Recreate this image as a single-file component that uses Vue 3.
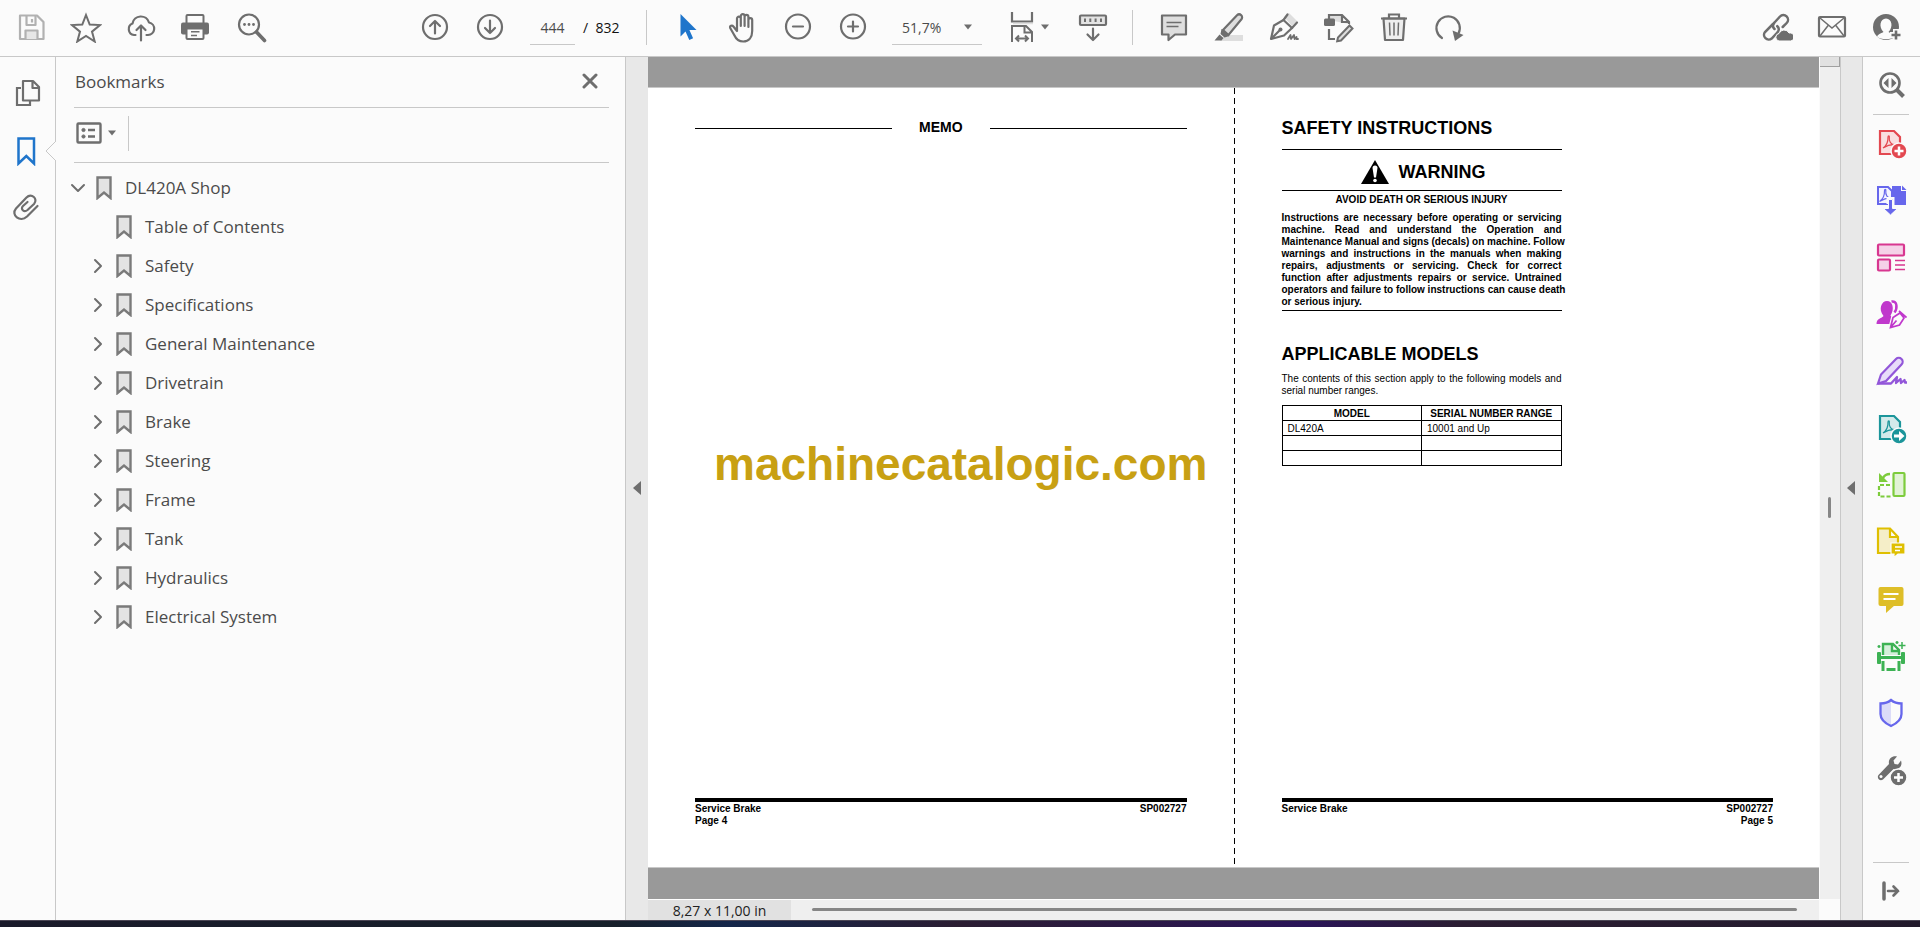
<script setup>
import { ref } from 'vue'

const pageNumber = ref('444')
const zoom = ref('51,7%')

const G = '#6e6e6e'
const line = `fill="none" stroke="${G}" stroke-width="2.2" stroke-linecap="round" stroke-linejoin="round"`
const pdfMark = (c) => `<path d="M8 21c3-2 5.200-5.500 5-11c0-1.500 1.500-1.500 1.300 0c-.6 4.500 1.700 7.700 5.700 7.700c-4-.4-8 .9-12 3.300z" fill="none" stroke="${c}" stroke-width="1.200"/>`

const fileActions = [
  { label: 'Save', svg: '<g fill="none" stroke="#b1b1b1" stroke-width="2.200" stroke-linejoin="round"><path d="M5 4.500H22L28.500 11V28H5z"/><path d="M11.500 5v9h9V5M17 8v3.500"/><path d="M10.500 28v-8.500h12V28" fill="#e6e6e6"/></g>' },
  { label: 'Star', svg: `<path d="M16 4l3.700 9.600 10.300.5-8 6.500 2.700 9.900L16 25l-8.700 5.500 2.700-9.900-8-6.500 10.300-.5z" fill="none" stroke="${G}" stroke-width="2"/>` },
  { label: 'Upload', svg: `<g ${line}><path d="M10.500 24H9A6 6 0 0 1 7.500 12.500A8.500 8.500 0 0 1 24 11.500A6.300 6.300 0 0 1 23 24H21.500"/><path d="M16 29.500V15M11.500 19l4.500-4.500 4.500 4.500"/></g>` },
  { label: 'Print', svg: `<rect x="6.500" y="4" width="17" height="9" rx="1" fill="#fbfbfb" stroke="${G}" stroke-width="2"/><rect x="1" y="11.500" width="28" height="12" rx="2" fill="${G}"/><rect x="6.500" y="17.500" width="17" height="10.500" rx="1" fill="#fbfbfb" stroke="${G}" stroke-width="2"/><path d="M11 20.800h8.500M11 24.500h6M24 14.500h2" stroke="${G}" stroke-width="1.500"/>` },
  { label: 'Find', svg: `<circle cx="14" cy="13.500" r="10" ${line}/><path d="M21.500 21l8 8.500" stroke="${G}" stroke-width="3.600" stroke-linecap="round"/><g fill="${G}"><circle cx="9.500" cy="13.500" r="1.400"/><circle cx="14" cy="13.500" r="1.400"/><circle cx="18.500" cy="13.500" r="1.400"/></g>` },
]
const pageActions = [
  { label: 'Previous page', svg: `<g ${line}><circle cx="16" cy="16" r="12"/><path d="M16 22.500V10M11 15l5-5 5 5"/></g>` },
  { label: 'Next page', svg: `<g ${line}><circle cx="16" cy="16" r="12"/><path d="M16 9.500V22M11 17l5 5 5-5"/></g>` },
]
const viewActions = [
  { label: 'Select', svg: '<path d="M8.500 3v22.500l5-5 3.800 8.500 3.800-1.700-3.700-8.300h7.100z" fill="#1f75cb"/>' },
  { label: 'Pan', svg: `<path d="M10 18V7.500a1.900 1.900 0 0 1 3.800 0V15V5a1.900 1.900 0 0 1 3.800 0V15V5.800a1.900 1.900 0 0 1 3.800 0V16V9a1.900 1.900 0 0 1 3.800 0V20c0 6-3.200 10.500-9 10.500c-5 0-7.200-2.500-9-6.500L3.200 17c-.7-2 1.800-3.200 3.200-1.500L10 20z" ${line}/>` },
  { label: 'Zoom out', svg: `<g ${line}><circle cx="16" cy="15.500" r="12"/><path d="M11 15.500h10"/></g>` },
  { label: 'Zoom in', svg: `<g ${line}><circle cx="16" cy="15.500" r="12"/><path d="M11 15.500h10M16 10.500v10"/></g>` },
]
const fitIcon = `<path d="M6 1v9.500h20V1" fill="none" stroke="${G}" stroke-width="2.200"/><path d="M7 12.500h20" stroke="#dedede" stroke-width="1.500"/><path d="M6 31V15H20l6 6V31M18.500 15v6.500H26M10 27.500h12M13 24.500l-3 3 3 3M19 24.500l3 3-3 3" fill="none" stroke="${G}" stroke-width="2"/>`
const keysIcon = `<rect x="3" y="4.500" width="26" height="9.500" rx="1" fill="#e3e3e3" stroke="${G}" stroke-width="2.200"/><path d="M8 7.500v3.500M13.300 7.500v3.500M18.600 7.500v3.500M24 7.500v3.500" stroke="${G}" stroke-width="2"/><path d="M16 17.500v11M10.500 23.500l5.500 5.500 5.500-5.500" ${line}/>`
const editActions = [
  { label: 'Comment', svg: `<path d="M4 4.500h24v19H17l-6.500 5.500v-5.500H4z" fill="#dedede" stroke="${G}" stroke-width="2.200" stroke-linejoin="round"/><path d="M8.500 11.500h15M8.500 15.500h12" stroke="${G}" stroke-width="1.600"/>` },
  { label: 'Highlight', svg: `<path d="M12 24H30v6H7z" fill="#dedede"/><path d="M10 19L24 4.300a3 3 0 0 1 4.200 4.300L15.500 24z" fill="#dedede" stroke="${G}" stroke-width="2.200"/><path d="M8.500 18l8 7-5 1.500-4-3.500zM6.500 23.500l4 3.500-2 2.500H1.500z" fill="${G}"/>` },
  { label: 'Sign', svg: `<path d="M16 6l5-4 8 8-5 5z" fill="#dedede"/><g ${line}><path d="M19.500 3.500L15.500 9l8.500 8 5-5.500"/><path d="M15.500 9L6 14.500L3 28l13-3.500L24 17"/><path d="M3.500 27.500l8.500-8.500"/><path d="M20 28l2.500-4 .5 4 3-4 .5 4 2-2v2h1.500" stroke-width="1.800"/></g><circle cx="12.500" cy="18.500" r="2" fill="${G}"/>` },
  { label: 'Edit document', svg: `<path d="M6 9V4H19l7 7v2M19 4v7h6" fill="#dedede" stroke="${G}" stroke-width="2.200"/><rect x="1" y="7.500" width="11" height="7.500" rx="1.500" fill="${G}"/><path d="M6 18v10h6" fill="none" stroke="${G}" stroke-width="2.200"/><path d="M26.500 14.500l3 3L18 29.500l-3.800.8.800-3.800z" fill="#dedede" stroke="${G}" stroke-width="2"/>` },
  { label: 'Delete', svg: `<path d="M5.500 7.500h21L25 29H7z" fill="#eeeeee" stroke="${G}" stroke-width="2.200" stroke-linejoin="round"/><path d="M3 7.500h26M11 7V3.500h10V7" fill="none" stroke="${G}" stroke-width="2.200"/><path d="M11.500 11.500l.5 13M16 11.500v13M20.500 11.500l-.5 13" stroke="${G}" stroke-width="1.500"/>` },
  { label: 'Rotate', svg: `<path d="M9 27A11.700 11.700 0 1 1 25.500 22.500" ${line}/><path d="M19.500 19.500l11 4.500-8.500 6z" fill="${G}"/>` },
]
const shareActions = [
  { label: 'Share link', svg: `<g fill="none" stroke="${G}" stroke-width="2.500" stroke-linecap="round"><path d="M13.500 18c-2-2-2-4.500 0-6.500l5.500-6a4.600 4.600 0 0 1 6.700 6.500l-4 4"/><path d="M12 13l-8 8a4.700 4.700 0 0 0 6.700 6.500l5.600-6c2-2 2-4.500 0-6.300"/></g><path d="M18 30a3.800 3.800 0 0 1 0-7.500 5.500 5.500 0 0 1 10-.5 4 4 0 0 1 1.500 8z" fill="${G}" stroke="#fbfbfb"/>` },
  { label: 'Email', svg: `<g fill="none" stroke="${G}"><rect x="3" y="6" width="26" height="19.500" rx="1" stroke-width="2.200"/><path d="M4 7l12 10L28 7M4 25l8.500-11M28 25l-8.500-11" stroke-width="1.500"/></g>` },
  { label: 'Account', svg: `<circle cx="15" cy="16" r="13" fill="${G}"/><path d="M6 25.500c1.500-3 5.500-3.500 6.500-4.500c-5-5-3.500-13.500 2.500-13.500s7.500 8.500 2.500 13.500c1 1 5 1.500 6.500 4.500c-3 3.500-15 3.500-18 0z" fill="#fbfbfb"/><path d="M25 18v12M19 24h12" stroke="#fbfbfb" stroke-width="6"/><path d="M25 19.500v9M20.500 24h9" stroke="${G}" stroke-width="2.600"/>` },
]
const railTabs = [
  { label: 'Page thumbnails', svg: `<path d="M9 11H5v17h13v-4" fill="none" stroke="${G}" stroke-width="2.200"/><path d="M11 4h10l6 6v13.500H11zM20.500 4v7H27" fill="#fbfbfb" stroke="${G}" stroke-width="2.200" stroke-linejoin="round"/>` },
  { label: 'Bookmarks', svg: '<path d="M6.500 4.500h15.500V29.500l-7.700-7.500-7.800 7.500z" fill="none" stroke="#1f75cb" stroke-width="2.500"/>' },
  { label: 'Attachments', svg: `<path d="M25.500 15L15 25.500C8 32-1.500 24 4 17.500L14.500 6.500C19.500 1.500 26.500 8 22 13L15.500 19C12 22 8 18 11 15L15.500 11" ${line}/>` },
]
const tools = [
  { label: 'Create PDF', svg: `<path d="M5 4h14l6 6v17H5z" fill="#f9dfe0" stroke="#e34850" stroke-width="2.200"/>${pdfMark('#e34850')}<circle cx="24" cy="24" r="8" fill="#e34850" stroke="#fbfbfb" stroke-width="1.500"/><path d="M24 19.500v9M19.500 24h9" stroke="#fff" stroke-width="2.500"/>` },
  { label: 'Combine Files', svg: `<path d="M17 2h9v5h5v14H17z" fill="#6767ec"/><path d="M27 1.500l4.500 4.500H27z" fill="#6767ec"/><path d="M3 3h10l4 4v13H3z" fill="#f4f4ff" stroke="#6767ec" stroke-width="2"/><g transform="translate(-3.500 -3.500)">${pdfMark('#6767ec')}</g><path d="M12.500 20V14h6v11" fill="none" stroke="#fbfbfb" stroke-width="2"/><path d="M13.500 15.500h4V24.500h5l-7 6.500-7-6.500h5z" fill="#6767ec" stroke="#fbfbfb" stroke-width="1"/>` },
  { label: 'Organize Pages', svg: '<g fill="#f5d2e8" stroke="#d83790" stroke-width="2.200"><rect x="3" y="3.500" width="26" height="11" rx="1"/><rect x="3" y="18.500" width="12" height="11" rx="1"/></g><path d="M20 19.500h10M20 24h10M20 28.500h10" stroke="#d83790" stroke-width="1.500"/>' },
  { label: 'Request Signatures', svg: '<path d="M1.500 26c0-6 5.500-5.500 7-8C3 11 6.500 3 12 3s8 8 3.500 14.500c1.500 2.500 5 2 6 8.500z" fill="#c038cc"/><path d="M16.500 3.500c6-1 6 7 3 11" fill="none" stroke="#c038cc" stroke-width="2.500"/><path d="M15.500 29.500l2.500-10 7-4.500 4 5-4.500 7z" fill="#fbfbfb" stroke="#fbfbfb" stroke-width="4"/><path d="M15.500 29.500l2.500-10 7-4.500 4 5-4.500 7zM15.500 29.500l6-7M24 13l7.500 6.500" fill="none" stroke="#c038cc" stroke-width="1.700"/>' },
  { label: 'Fill and Sign', svg: '<path d="M3 28.500l3-9L21 4a3.600 3.600 0 0 1 5.500 5.500L11 26z" fill="#e8dcfa" stroke="#9256d9" stroke-width="2.200"/><path d="M3 28.500h13l6-6.500-1 6 4.500-4 .5 4 3.500-3 .500 2.500h2" fill="none" stroke="#9256d9" stroke-width="2.300" stroke-linejoin="round"/>' },
  { label: 'Export PDF', svg: `<path d="M5 4h14l6 6v17H5z" fill="#d3eaea" stroke="#1b959a" stroke-width="2.200"/>${pdfMark('#1b959a')}<circle cx="24" cy="24" r="8" fill="#1b959a" stroke="#fbfbfb" stroke-width="1.500"/><path d="M19 22.500h5v-3.500l5.500 5-5.500 5v-3.500h-5z" fill="#fff"/>` },
  { label: 'Compare Files', svg: '<rect x="18.500" y="4" width="11" height="23" rx="1" fill="#e2f3d6" stroke="#7dcc3c" stroke-width="2.200"/><path d="M15 16H4v11.500h12" fill="none" stroke="#7dcc3c" stroke-width="2.200" stroke-dasharray="4 2"/><path d="M15 5c-4 0-6 2-7 4" fill="none" stroke="#7dcc3c" stroke-width="2.500"/><path d="M4 4v9h9z" fill="#7dcc3c"/>' },
  { label: 'Send for Comments', svg: '<path d="M3 2.500h12l8 8.500v16H3zM15 2.500V11h8" fill="#f5eec8" stroke="#dfbf00" stroke-width="2.200"/><path d="M16 17h14v11h-7l-4 3.500V28h-3z" fill="#dfbf00" stroke="#fbfbfb" stroke-width="1.200"/><path d="M20 21h7M20 24.500h5" stroke="#fff" stroke-width="1.500"/>' },
  { label: 'Comment', svg: '<rect x="3.500" y="4" width="25" height="19" rx="2" fill="#debe28"/><path d="M11 22v8l9-8z" fill="#debe28"/><path d="M8.500 11h15M8.500 16h12" stroke="#fff" stroke-width="2"/>' },
  { label: 'Scan and OCR', svg: '<path d="M8 15V4h10l6 6v5M17 4v7h7" fill="#d5efda" stroke="#3db254" stroke-width="2.400"/><rect x="2" y="12" width="4" height="12" rx="1" fill="#3db254"/><rect x="26" y="12" width="4" height="12" rx="1" fill="#3db254"/><path d="M4 17.500h24M8 21v10M24 21v10M11.500 29.500h9" stroke="#3db254" stroke-width="3" fill="none"/><path d="M27 2v7M23.500 5.500h7M4 5v3M2.500 6.500h3M22 1v3M20.500 2.500h3" stroke="#3db254" stroke-width="1.500"/>' },
  { label: 'Protect', svg: '<path d="M16 3.500C13 6 9 7 5.500 7v10c0 6 5 9.500 10.500 12.500z" fill="#dcdcf8"/><path d="M16 3C13 5.500 9 6.500 5.500 6.500V17c0 6 5 9.500 10.500 12C21.500 26.500 26.500 23 26.500 17V6.500C23 6.500 19 5.500 16 3z" fill="none" stroke="#6767ec" stroke-width="2.300"/>' },
  { label: 'More Tools', svg: `<path d="M14 10C13 5 17 1.500 22 2.500l-3.500 4 1 3.500 3.500.5 3-4c2 6-2.500 9.500-7.500 8.500L9 24.500c-3 4-8 0-5.500-3.500z" fill="${G}"/><circle cx="6" cy="22.500" r="1.500" fill="#fbfbfb"/><circle cx="23.500" cy="23.500" r="8.500" fill="${G}" stroke="#fbfbfb" stroke-width="1.500"/><path d="M23.500 19v9M19 23.500h9" stroke="#fff" stroke-width="2.500"/>` },
]
const zoomToolIcon = `<circle cx="15" cy="14" r="9.500" fill="none" stroke="${G}" stroke-width="2.600"/><path d="M13.500 9v10l-5-5zM16.500 9v10l5-5z" fill="${G}"/><path d="M22 21l6.500 6.500" stroke="${G}" stroke-width="4"/>`

const children = ['Table of Contents', 'Safety', 'Specifications', 'General Maintenance', 'Drivetrain', 'Brake', 'Steering', 'Frame', 'Tank', 'Hydraulics', 'Electrical System']
const bookmarks = [
  { title: 'DL420A Shop', root: true, toggle: true },
  ...children.map((title, i) => ({ title, root: false, toggle: i > 0 })),
]

const warningLines = [
  'Instructions are necessary before operating or servicing',
  'machine. Read and understand the Operation and',
  'Maintenance Manual and signs (decals) on machine. Follow',
  'warnings and instructions in the manuals when making',
  'repairs, adjustments or servicing. Check for correct',
  'function after adjustments repairs or service. Untrained',
  'operators and failure to follow instructions can cause death',
  'or serious injury.',
]
</script>

<template>
  <div class="app">
    <header class="toolbar">
      <div class="group first">
        <button v-for="a in fileActions" :key="a.label" class="tool" :aria-label="a.label"><svg viewBox="0 0 32 32" v-html="a.svg" /></button>
      </div>
      <div class="group pages">
        <button v-for="a in pageActions" :key="a.label" class="tool" :aria-label="a.label"><svg viewBox="0 0 32 32" v-html="a.svg" /></button>
      </div>
      <input v-model="pageNumber" class="page-input" aria-label="Page number" />
      <span class="page-total">/&nbsp; 832</span>
      <span class="divider" />
      <div class="group view">
        <button v-for="a in viewActions" :key="a.label" class="tool" :aria-label="a.label"><svg viewBox="0 0 32 32" v-html="a.svg" /></button>
      </div>
      <div class="zoom-box">
        <select v-model="zoom" class="zoom" aria-label="Zoom level"><option>51,7%</option><option>100%</option></select>
        <svg class="caret" viewBox="0 0 10 6"><path d="M0 0h10L5 6z" /></svg>
      </div>
      <button class="fit" aria-label="Fit width">
        <svg viewBox="0 0 32 32" v-html="fitIcon" />
        <svg class="caret" viewBox="0 0 10 6"><path d="M0 0h10L5 6z" /></svg>
      </button>
      <button class="tool" aria-label="Show keys"><svg viewBox="0 0 32 32" v-html="keysIcon" /></button>
      <span class="divider second" />
      <div class="group edit">
        <button v-for="a in editActions" :key="a.label" class="tool" :aria-label="a.label"><svg viewBox="0 0 32 32" v-html="a.svg" /></button>
      </div>
      <div class="group share">
        <button v-for="a in shareActions" :key="a.label" class="tool" :aria-label="a.label"><svg viewBox="0 0 32 32" v-html="a.svg" /></button>
      </div>
    </header>

    <div class="body">
      <nav class="rail" aria-label="Panels">
        <button v-for="t in railTabs" :key="t.label" class="rail-tab" :aria-label="t.label">
          <svg viewBox="0 0 32 32" v-html="t.svg" />
          <svg v-if="t.label === 'Bookmarks'" class="notch" viewBox="0 0 11 20"><path d="M11 0L1 10l10 10" /></svg>
        </button>
      </nav>

      <aside class="panel">
        <div class="panel-head">
          <h2>Bookmarks</h2>
          <button class="close" aria-label="Close"><svg viewBox="0 0 16 16"><path d="M2 2l12 12M14 2L2 14" /></svg></button>
        </div>
        <div class="panel-tools">
          <button class="options" aria-label="Options">
            <svg class="options-icon" viewBox="0 0 26 22">
              <rect x="1.500" y="1.500" width="23" height="19" rx="1" />
              <path d="M12 8h7M12 14.500h7" />
              <circle cx="7.500" cy="8" r="1.600" /><circle cx="7.500" cy="14.500" r="1.600" />
            </svg>
            <svg class="caret" viewBox="0 0 10 6"><path d="M0 0h10L5 6z" /></svg>
          </button>
        </div>
        <ul class="tree">
          <li v-for="b in bookmarks" :key="b.title" :class="{ child: !b.root }">
            <button v-if="b.toggle" class="chevron" :aria-label="'Toggle ' + b.title">
              <svg viewBox="0 0 16 16"><path :d="b.root ? 'M2 5l6 6 6-6' : 'M5 2l6 6-6 6'" /></svg>
            </button>
            <span v-else class="chevron" />
            <svg class="mark" viewBox="0 0 16 24"><path d="M1.500 1.500h13V22L8 16.500 1.500 22z" /></svg>
            <a href="#">{{ b.title }}</a>
          </li>
        </ul>
      </aside>

      <button class="splitter left" aria-label="Collapse navigation"><svg viewBox="0 0 8 14"><path d="M8 0v14L0 7z" /></svg></button>

      <main class="viewer">
        <div class="canvas">
          <div class="sheet">
            <section class="page">
              <h3 class="memo">MEMO</h3>
              <p class="watermark">machinecatalogic.com</p>
              <footer>
                <div>Service Brake<br />Page 4</div>
                <div class="right">SP002727</div>
              </footer>
            </section>
            <section class="page second-page">
              <div class="column">
                <h1>SAFETY INSTRUCTIONS</h1>
                <div class="warning">
                  <svg viewBox="0 0 28 24"><path d="M14 0l14 24H0z" /><path class="bang" d="M11.500 8a2.500 2.500 0 0 1 5 0L15 17.500h-2z" /><circle class="bang" cx="14" cy="20.500" r="1.800" /></svg>
                  WARNING
                </div>
                <h4>AVOID DEATH OR SERIOUS INJURY</h4>
                <p class="notice"><span v-for="l in warningLines" :key="l">{{ l }}</span></p>
                <h1 class="models">APPLICABLE MODELS</h1>
                <p class="intro">The contents of this section apply to the following models and serial number ranges.</p>
                <table>
                  <thead><tr><th>MODEL</th><th>SERIAL NUMBER RANGE</th></tr></thead>
                  <tbody>
                    <tr><td>DL420A</td><td>10001 and Up</td></tr>
                    <tr><td></td><td></td></tr>
                    <tr><td></td><td></td></tr>
                  </tbody>
                </table>
              </div>
              <footer>
                <div>Service Brake</div>
                <div class="right">SP002727<br />Page 5</div>
              </footer>
            </section>
          </div>
        </div>
        <div class="status">
          <span class="size">8,27 x 11,00 in</span>
          <span class="h-track"><span class="h-thumb" /></span>
        </div>
      </main>

      <div class="v-scroll">
        <div class="v-track"><span class="v-top" /><span class="v-thumb" /></div>
      </div>

      <button class="splitter" aria-label="Collapse tools"><svg viewBox="0 0 8 14"><path d="M8 0v14L0 7z" /></svg></button>

      <nav class="tools" aria-label="Tools">
        <button class="side first-tool" aria-label="Search tools"><svg viewBox="0 0 32 32" v-html="zoomToolIcon" /></button>
        <button v-for="t in tools" :key="t.label" class="side" :aria-label="t.label"><svg viewBox="0 0 32 32" v-html="t.svg" /></button>
        <button class="expand" aria-label="Expand tools"><svg viewBox="0 0 18 20"><path d="M2 2v16" stroke-width="3.500" /><path d="M6 10h10M11.500 5.500L16 10l-4.500 4.500" stroke-width="2.600" /></svg></button>
      </nav>
    </div>
    <div class="taskbar" />
  </div>
</template>

<style>
body { margin: 0; overflow: hidden; }
</style>

<style scoped>
* { box-sizing: border-box; }
.app {
  height: 100vh;
  display: flex;
  flex-direction: column;
  background: #fbfbfb;
  color: #4b4b4b;
  font-family: "Open Sans", "Noto Sans", sans-serif;
  font-size: 14px;
}
button { border: 0; padding: 0; background: none; display: flex; align-items: center; justify-content: center; }
svg { display: block; flex: none; }
h1, h2, h3, h4, p, ul { margin: 0; padding: 0; font-weight: inherit; }

.toolbar { flex: none; height: 57px; display: flex; align-items: center; padding: 0 6px 2px 3px; border-bottom: 1px solid #c8c8c8; }
.group { display: flex; }
.tool { width: 55px; height: 44px; }
.tool svg, .fit svg:first-child { width: 32px; height: 32px; }
.pages { margin-left: 129px; }
.page-input { width: 45px; height: 35px; margin: 1px 0 0 13px; border: 0; border-bottom: 1px solid #c8c8c8; background: none; padding: 0; text-align: center; font: inherit; color: #4b4b4b; border-radius: 0; outline: 0; }
.page-total { width: 71px; padding-left: 8px; color: #111; white-space: nowrap; }
.divider { width: 1px; height: 35px; background: #c8c8c8; margin-right: 13px; }
.caret { width: 8px; height: 6px; fill: #6e6e6e; }
.zoom-box { display: flex; align-items: center; width: 90px; height: 35px; margin: 1px 0 0 12px; padding-right: 10px; border-bottom: 1px solid #c8c8c8; }
.zoom { appearance: none; flex: 1; min-width: 0; border: 0; background: none; padding: 0 0 0 10px; font: inherit; color: #4b4b4b; }
.fit { margin: 0 16px 0 24px; gap: 3px; }
.second { margin: 0 13px 0 12px; }
.share { margin-left: auto; }

.body { flex: 1; min-height: 0; display: flex; }
.rail { flex: none; width: 56px; border-right: 1px solid #c8c8c8; padding-top: 7px; }
.rail-tab { position: relative; width: 55px; height: 57px; }
.rail-tab svg { width: 32px; height: 32px; }
.rail-tab svg.notch { position: absolute; right: -1px; top: 20px; width: 11px; height: 20px; fill: #fbfbfb; stroke: #c8c8c8; }

.panel { flex: none; width: 569px; padding: 0 16px 0 18px; }
.panel-head { height: 51px; display: flex; align-items: center; justify-content: space-between; padding: 0 11px 2px 1px; border-bottom: 1px solid #c8c8c8; }
.panel-head h2 { font-size: 17px; }
.close { width: 16px; height: 16px; }
.close svg { width: 16px; height: 16px; fill: none; stroke: #6e6e6e; stroke-width: 3; stroke-linecap: round; }
.panel-tools { height: 55px; border-bottom: 1px solid #c8c8c8; display: flex; align-items: center; padding-bottom: 4px; }
.options { height: 35px; padding: 0 12px 0 2px; gap: 6px; border-right: 1px solid #c8c8c8; }
.options-icon { width: 26px; height: 22px; fill: none; stroke: #6e6e6e; stroke-width: 2.4; }
.options-icon circle { fill: #6e6e6e; stroke-width: 1; }
.tree { list-style: none; padding-top: 5px; margin-left: -6px; }
.tree li { height: 39px; display: flex; align-items: center; font-size: 17px; }
.tree .child { padding-left: 20px; }
.tree a { color: inherit; text-decoration: none; }
.chevron { width: 20px; height: 20px; margin-right: 8px; flex: none; }
.chevron svg { width: 16px; height: 16px; fill: none; stroke: #6e6e6e; stroke-width: 2; stroke-linecap: round; stroke-linejoin: round; }
.mark { width: 16px; height: 24px; margin-right: 13px; fill: #e3e3e3; stroke: #7a7a7a; stroke-width: 2.4; }

.splitter { flex: none; width: 23px; background: #e8e8e8; border: solid #c8c8c8; border-width: 0 1px; padding: 0 2px 1px 0; }
.splitter.left { border-right: 0; padding-right: 0; }
.splitter svg { width: 8px; height: 14px; fill: #6e6e6e; }

.viewer { flex: 1; min-width: 0; display: flex; flex-direction: column; }
.canvas { flex: 1; min-height: 0; display: flex; background: #999; padding: 30px 0 31px; border-bottom: 1px solid #fff; }
.sheet { flex: 1; display: flex; background: #fff; border: solid #c8c8c8; border-width: 1px 0; color: #000; font-family: "Liberation Sans", Arial, sans-serif; font-size: 10px; line-height: 12px; }
.page { position: relative; flex: 1; display: flex; flex-direction: column; padding: 32px 47px 38px; }
.second-page { padding-left: 48px; padding-right: 46px; }
.second-page::before { content: ""; position: absolute; left: 0; top: 0; bottom: 3px; width: 1px; background: repeating-linear-gradient(#000 0 6px, #fff 6px 10px); }
.memo { display: flex; align-items: center; gap: 27px; font-size: 14px; line-height: 14px; font-weight: bold; }
.memo::before, .memo::after { content: ""; flex: 1; height: 1px; margin-top: 2px; background: #000; }
.watermark { position: absolute; left: 66px; top: 350px; font-size: 46px; line-height: 52px; font-weight: bold; color: #c8a013; z-index: 1; }
footer { margin-top: auto; height: 31px; border-top: 4px solid #000; padding-top: 1px; display: flex; justify-content: space-between; font-weight: bold; }
.right { text-align: right; }
.column { width: 280px; margin-top: -2px; }
h1 { font-size: 18px; line-height: 20px; font-weight: bold; white-space: nowrap; }
.warning { display: flex; align-items: center; justify-content: center; gap: 10px; height: 42px; margin-top: 11px; border: solid #000; border-width: 1px 0; font-size: 18px; line-height: 20px; font-weight: bold; padding: 3px 0 0 3px; }
.warning svg { width: 28px; height: 24px; }
.bang { fill: #fff; }
h4 { margin-top: 2px; text-align: center; font-weight: bold; line-height: 13px; }
.notice { margin-top: 6px; padding-bottom: 2px; font-weight: bold; border-bottom: 1px solid #000; }
.notice span { display: block; white-space: nowrap; text-align-last: justify; }
.notice span:last-child { text-align-last: left; }
.models { margin-top: 33px; }
.intro { margin-top: 9px; text-align: justify; }
table { width: 100%; margin-top: 8px; border-collapse: collapse; table-layout: fixed; }
th, td { border: 1px solid #000; height: 15px; line-height: 11px; padding: 1px 5px; font-weight: inherit; }
th { font-weight: bold; padding: 1px 0; white-space: nowrap; }

.status { flex: none; height: 20px; display: flex; background: #efefef; }
.size { width: 143px; background: #e1e1e1; color: #222; text-align: center; line-height: 21px; }
.h-track { flex: 1; padding: 8px 22px 0 21px; }
.h-thumb { display: block; height: 3px; border-radius: 2px; background: #868686; }
.v-scroll { flex: none; width: 21px; padding: 0 0 21px 1px; }
.v-track { height: 100%; background: #efefef; display: flex; flex-direction: column; }
.v-top { width: 100%; height: 10px; background: #e1e1e1; border: solid #a0a0a0; border-width: 0 1px 1px 0; }
.v-thumb { width: 3px; height: 21px; margin: 430px 0 0 8px; border-radius: 2px; background: #868686; }

.tools { flex: none; width: 57px; display: flex; flex-direction: column; align-items: center; padding-right: 1px; }
.side { width: 36px; height: 57px; flex: none; padding-bottom: 2px; }
.side svg { width: 32px; height: 32px; }
.first-tool { height: 58px; border-bottom: 1px solid #c8c8c8; }
.expand { width: 36px; height: 58px; margin-top: auto; border-top: 1px solid #c8c8c8; padding-bottom: 1px; }
.expand svg { width: 18px; height: 20px; fill: none; stroke: #6e6e6e; stroke-linecap: round; }
.taskbar { flex: none; height: 7px; border-top: 1px solid #4b4655; background: linear-gradient(90deg, #1a1a2b, #17202b 32%, #14264a 38%, #2b1d32 50%, #2a1458 68%, #2b1d32 76%, #221a2c); }
</style>
